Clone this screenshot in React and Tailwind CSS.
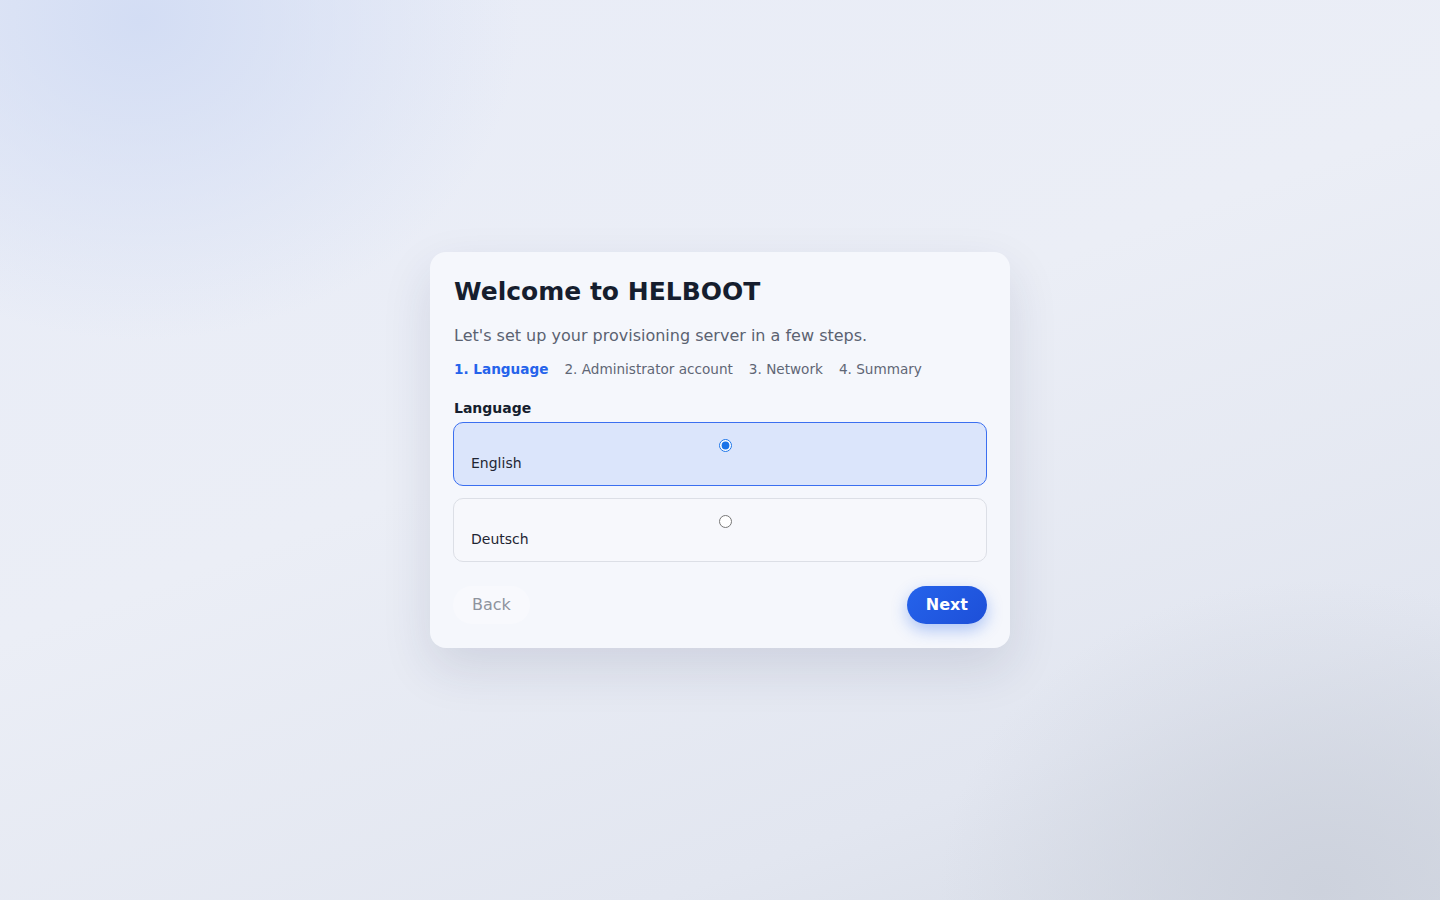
import { useState } from 'react';

const steps = ['1. Language', '2. Administrator account', '3. Network', '4. Summary'];
const languages = [
  { id: 'en', label: 'English' },
  { id: 'de', label: 'Deutsch' },
];

const App = () => {
  const [lang, setLang] = useState('en');

  return (
    <div className="relative min-h-screen w-full overflow-hidden bg-[linear-gradient(160deg,#e8ecf7_0%,#ebeef6_45%,#e2e6f0_80%,#d6dbe5_100%)] font-['DejaVu_Sans',sans-serif]">
      {/* background glows */}
      <div className="pointer-events-none absolute -left-[240px] -top-[300px] h-[640px] w-[760px] rounded-full bg-[radial-gradient(closest-side,#d3ddf4,rgba(211,221,244,0))]" />
      <div className="pointer-events-none absolute -bottom-[300px] -right-[260px] h-[620px] w-[760px] rounded-full bg-[radial-gradient(closest-side,#cdd2dd,rgba(205,210,221,0))]" />

      <div className="relative flex min-h-screen items-center justify-center">
        <div className="w-[580px] rounded-2xl bg-[#f5f7fc] p-6 shadow-[0_20px_50px_rgba(30,41,80,0.12)]">
          <h1 className="text-[25px] font-bold leading-8 text-[#161e2e]">Welcome to HELBOOT</h1>
          <p className="mt-[16px] text-[16px] leading-6 text-[#5b6271]">Let's set up your provisioning server in a few steps.</p>

          <div className="mt-[11px] flex gap-4 text-[13.6px] leading-5 text-[#5f6675]">
            {steps.map((s, i) => (
              <span key={s} className={i === 0 ? 'font-bold text-[#2563eb]' : ''}>{s}</span>
            ))}
          </div>

          <div className="mt-[19px] text-[14px] font-bold leading-5 text-[#161e2e]">Language</div>

          <div className="-mx-px mt-[4px] flex flex-col gap-3">
            {languages.map((l) => {
              const active = lang === l.id;
              return (
                <label
                  key={l.id}
                  className={`flex h-[64px] cursor-pointer flex-col rounded-[10px] border px-[17px] pt-[16px] ${active ? 'border-[#3b6ff0] bg-[#dbe5fb]' : 'border-[#dcdfe6] bg-[#f7f8fc]'}`}
                >
                  <input
                    type="radio"
                    name="lang"
                    checked={active}
                    onChange={() => setLang(l.id)}
                    className="ml-[248px] block h-[13px] w-[13px] accent-[#1a73e8]"
                  />
                  <span className="mt-px text-[14px] leading-5 text-[#1f2533]">{l.label}</span>
                </label>
              );
            })}
          </div>

          <div className="mt-6 flex items-center justify-between">
            <button className="-ml-px h-[38px] rounded-full bg-[#f8f9fd] px-[19px] text-[16px] text-[#8e939d]">Back</button>
            <button className="-mr-px h-[38px] rounded-full bg-[linear-gradient(135deg,#2563eb,#1d4fd8)] px-[19px] text-[16px] font-bold text-white shadow-[0_6px_16px_rgba(37,99,235,0.35)]">Next</button>
          </div>
        </div>
      </div>
    </div>
  );
};

export default App;
